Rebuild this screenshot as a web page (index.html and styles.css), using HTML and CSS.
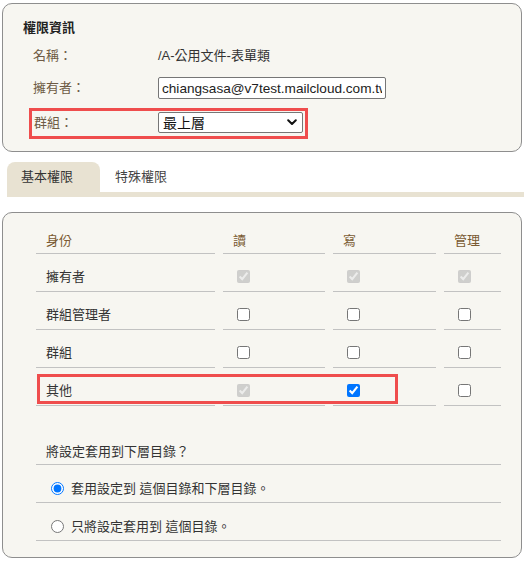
FILE: index.html
```html
<!DOCTYPE html>
<html lang="zh-Hant">
<head>
<meta charset="utf-8">
<title>權限資訊</title>
<link rel="stylesheet" href="styles.css">
</head>
<body>
<div class="page">
  <section class="panel info">
    <h2 class="info-title">權限資訊</h2>
    <div class="info-row row-name">
      <span class="label">名稱：</span>
      <span class="value">/A-公用文件-表單類</span>
    </div>
    <div class="info-row row-owner">
      <span class="label">擁有者：</span>
      <input class="text-input" type="text" value="chiangsasa@v7test.mailcloud.com.tw">
    </div>
    <div class="info-row row-group">
      <span class="label label-group">群組：</span>
      <div class="select-wrap">
        <select class="select"><option>最上層</option></select>
        <svg class="chevron" width="10" height="7" viewBox="0 0 10 7"><path d="M1.2 1.2 L5 5 L8.8 1.2" fill="none" stroke="#111" stroke-width="2" stroke-linecap="round" stroke-linejoin="round"/></svg>
      </div>
    </div>
    <div class="highlight highlight-group"></div>
  </section>

  <nav class="tabs">
    <div class="tab-list">
      <span class="tab tab-active">基本權限</span>
      <span class="tab">特殊權限</span>
    </div>
    <div class="tab-bar"></div>
  </nav>

  <section class="panel perms">
    <div class="perm-table">
      <div class="cell head">身份</div>
      <div class="cell head">讀</div>
      <div class="cell head">寫</div>
      <div class="cell head">管理</div>

      <div class="cell">擁有者</div>
      <div class="cell"><input type="checkbox" checked disabled></div>
      <div class="cell"><input type="checkbox" checked disabled></div>
      <div class="cell"><input type="checkbox" checked disabled></div>

      <div class="cell">群組管理者</div>
      <div class="cell"><input type="checkbox"></div>
      <div class="cell"><input type="checkbox"></div>
      <div class="cell"><input type="checkbox"></div>

      <div class="cell">群組</div>
      <div class="cell"><input type="checkbox"></div>
      <div class="cell"><input type="checkbox"></div>
      <div class="cell"><input type="checkbox"></div>

      <div class="cell">其他</div>
      <div class="cell"><input type="checkbox" checked disabled></div>
      <div class="cell"><input type="checkbox" checked></div>
      <div class="cell"><input type="checkbox"></div>
    </div>

    <div class="apply">
      <div class="apply-question">將設定套用到下層目錄？</div>
      <label class="apply-option"><input type="radio" name="apply" checked><span>套用設定到 這個目錄和下層目錄。</span></label>
      <label class="apply-option"><input type="radio" name="apply"><span>只將設定套用到 這個目錄。</span></label>
    </div>

    <div class="highlight highlight-other"></div>
  </section>
</div>
</body>
</html>
```

FILE: styles.css
```css
* {
  box-sizing: border-box;
}

html, body {
  margin: 0;
  padding: 0;
  background: #ffffff;
}

body {
  font-family: "Liberation Sans", "Noto Sans CJK TC", sans-serif;
  font-size: 13px;
  color: #333333;
}

.page {
  padding: 3px 0 0 2px;
  width: 527px;
}

.panel {
  position: relative;
  width: 520px;
  background: #f7f6f1;
  border: 1px solid #8e8e8e;
  border-radius: 10px;
}

/* ---------- info panel ---------- */
.info {
  padding: 15px 0 18px 20px;
}

.info-title {
  margin: 0;
  font-size: 13px;
  line-height: 18px;
  font-weight: 700;
  color: #222222;
}

.info-row {
  display: flex;
  align-items: center;
  padding-left: 10px;
}

.row-name {
  margin-top: 10px;
  height: 18px;
  line-height: 18px;
}

.row-owner {
  margin-top: 12px;
  height: 22px;
}

.row-group {
  margin-top: 13px;
  height: 21px;
}

.label {
  width: 125px;
  flex: none;
  color: #6e5b45;
  line-height: 18px;
}

.label-group {
  padding-left: 1px;
}

.value {
  color: #333333;
}

.text-input {
  width: 228px;
  height: 22px;
  margin: 0;
  padding: 0 3px;
  border: 1px solid #767676;
  border-radius: 2px;
  background: #ffffff;
  font-family: "Liberation Sans", "Noto Sans CJK TC", sans-serif;
  font-size: 13.6px;
  color: #222222;
}

.select-wrap {
  position: relative;
  width: 145px;
  height: 21px;
}

.select {
  -webkit-appearance: none;
  appearance: none;
  width: 145px;
  height: 21px;
  margin: 0;
  padding: 0 0 0 4px;
  border: 1px solid #767676;
  border-radius: 2px;
  background: #ffffff;
  font-family: "Liberation Sans", "Noto Sans CJK TC", sans-serif;
  font-size: 14px;
  color: #111111;
}

.chevron {
  position: absolute;
  right: 6px;
  top: 7px;
  pointer-events: none;
}

.highlight {
  position: absolute;
  border: 3px solid #ef4d4d;
  pointer-events: none;
}

.highlight-group {
  left: 26px;
  top: 104px;
  width: 279px;
  height: 31px;
}

/* ---------- tabs ---------- */
.tabs {
  margin: 10px 0 0 5px;
  width: 517px;
}

.tab-list {
  display: flex;
  height: 30px;
}

.tab {
  height: 30px;
  line-height: 30px;
  color: #444444;
}

.tab-active {
  width: 93px;
  padding-left: 14px;
  background: #e8e2d2;
  border-radius: 8px 8px 0 0;
  color: #333333;
}

.tab + .tab {
  padding-left: 15px;
}

.tab-bar {
  height: 5px;
  background: #e8e2d2;
}

/* ---------- permissions panel ---------- */
.perms {
  margin-top: 15px;
  padding: 16px 0 16px 33px;
}

.perm-table {
  display: grid;
  grid-template-columns: 179px 102px 103px 57px;
  column-gap: 8px;
  width: 465px;
}

.cell {
  display: flex;
  align-items: center;
  height: 38px;
  padding: 8px 0 0 10px;
  border-bottom: 1px solid #c2c2c2;
  color: #333333;
  line-height: 18px;
}

.cell.head {
  height: 25px;
  padding-top: 0;
  color: #7a5a32;
}

.cell input[type="checkbox"] {
  width: 13px;
  height: 13px;
  margin: 0 0 0 4px;
}

.apply {
  width: 465px;
  margin-top: 34px;
}

.apply-question {
  display: flex;
  align-items: center;
  height: 25px;
  padding-left: 10px;
  border-bottom: 1px solid #c2c2c2;
  color: #333333;
  line-height: 18px;
}

.apply-option {
  display: flex;
  align-items: center;
  height: 38px;
  padding: 10px 0 0 15px;
  border-bottom: 1px solid #c2c2c2;
  color: #333333;
  line-height: 18px;
}

.apply-option input[type="radio"] {
  width: 13px;
  height: 13px;
  margin: 0 7px 0 0;
}

.highlight-other {
  left: 34px;
  top: 161px;
  width: 361px;
  height: 30px;
}
```
